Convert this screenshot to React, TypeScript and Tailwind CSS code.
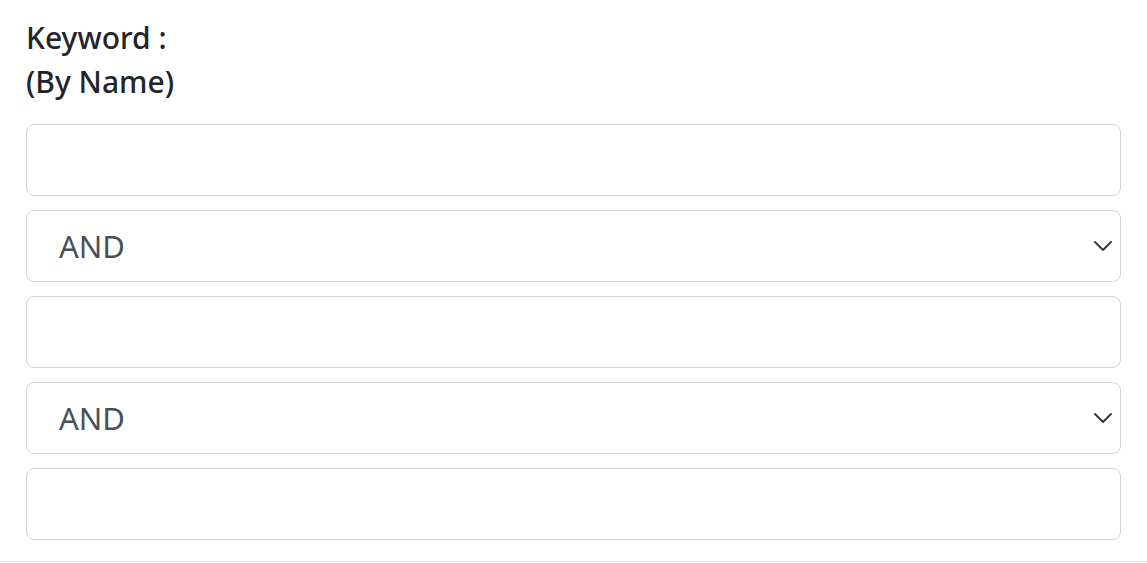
import { ChevronDown } from 'lucide-react';

const rows = ['input', 'select', 'input', 'select', 'input'] as const;

export default function App() {
  return (
    <div className="h-[563px] w-full bg-white font-['Noto_Sans',sans-serif]">
      <div className="flex flex-col border-b border-[#dee2e6] px-[26px] pb-[21px] pt-[16px]">
        <label className="mb-[20px] text-[30px] font-medium leading-[44px] text-[#212529]">
          Keyword :
          <br />
          (By Name)
        </label>
        <div className="flex flex-col gap-[14px]">
          {rows.map((kind, i) =>
            kind === 'input' ? (
              <input
                key={i}
                type="text"
                className="h-[72px] w-full rounded-[8px] border border-[#ced4da] bg-white px-8 text-[31px] text-[#495057] outline-none"
              />
            ) : (
              <div key={i} className="relative">
                <select className="h-[72px] w-full appearance-none rounded-[8px] border border-[#ced4da] bg-white pl-8 text-[31px] text-[#495057] outline-none">
                  <option>AND</option>
                  <option>OR</option>
                </select>
                <ChevronDown
                  size={32}
                  strokeWidth={1.5}
                  className="pointer-events-none absolute right-[2px] top-1/2 -translate-y-1/2 text-[#343a40]"
                />
              </div>
            ),
          )}
        </div>
      </div>
    </div>
  );
}
